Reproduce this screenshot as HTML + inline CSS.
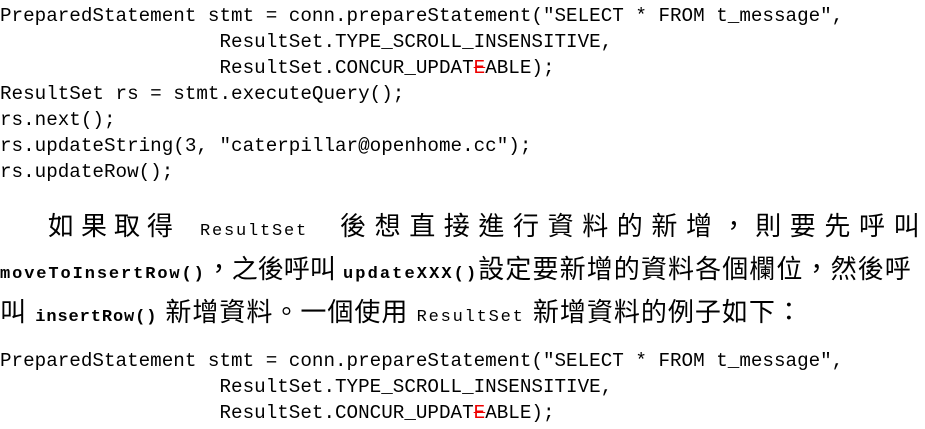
<!DOCTYPE html>
<html><head><meta charset="utf-8"><style>
body{margin:0;width:925px;height:429px;background:#fff;overflow:hidden;position:relative;color:#000}
.c{position:absolute;left:0;font-family:"Liberation Mono",monospace;font-size:19.25px;white-space:pre;line-height:26px}
.r{color:#e00;text-decoration:line-through}
.p{position:absolute;left:0;white-space:nowrap;font-family:"Liberation Sans","Noto Sans CJK TC",sans-serif;font-size:26px;line-height:32px}
.m{font-family:"Liberation Mono",monospace;font-weight:bold;font-size:17px;letter-spacing:1.9px}
.n{font-family:"Liberation Mono",monospace;font-size:17px;letter-spacing:1.8px}
</style></head><body>
<div class="c" style="top:3px">PreparedStatement stmt = conn.prepareStatement("SELECT * FROM t_message",
                   ResultSet.TYPE_SCROLL_INSENSITIVE,
                   ResultSet.CONCUR_UPDAT<span class="r">E</span>ABLE);
ResultSet rs = stmt.executeQuery();
rs.next();
rs.updateString(3, "caterpillar@openhome.cc");
rs.updateRow();</div>
<div class="p" style="top:210px;left:48px;letter-spacing:7px">如果取得</div>
<div class="p" style="top:210px;left:200px"><span class="n">ResultSet</span></div>
<div class="p" style="top:210px;left:340px;letter-spacing:8.6px">後想直接進行資料的新增，則要先呼叫</div>
<div class="p" style="top:253px"><span class="m">moveToInsertRow()</span>，之後呼叫 <span class="m" style="letter-spacing:2.1px">updateXXX()</span><span style="letter-spacing:1.1px">設定要新增的資料各個欄位，然後呼</span></div>
<div class="p" style="top:296px;letter-spacing:1px">叫 <span class="m" style="letter-spacing:0.9px">insertRow()</span><span style="margin-left:8px">新增資料。一個使用</span> <span class="n">ResultSet</span> 新增資料的例子如下：</div>
<div class="c" style="top:348px">PreparedStatement stmt = conn.prepareStatement("SELECT * FROM t_message",
                   ResultSet.TYPE_SCROLL_INSENSITIVE,
                   ResultSet.CONCUR_UPDAT<span class="r">E</span>ABLE);</div>
</body></html>
